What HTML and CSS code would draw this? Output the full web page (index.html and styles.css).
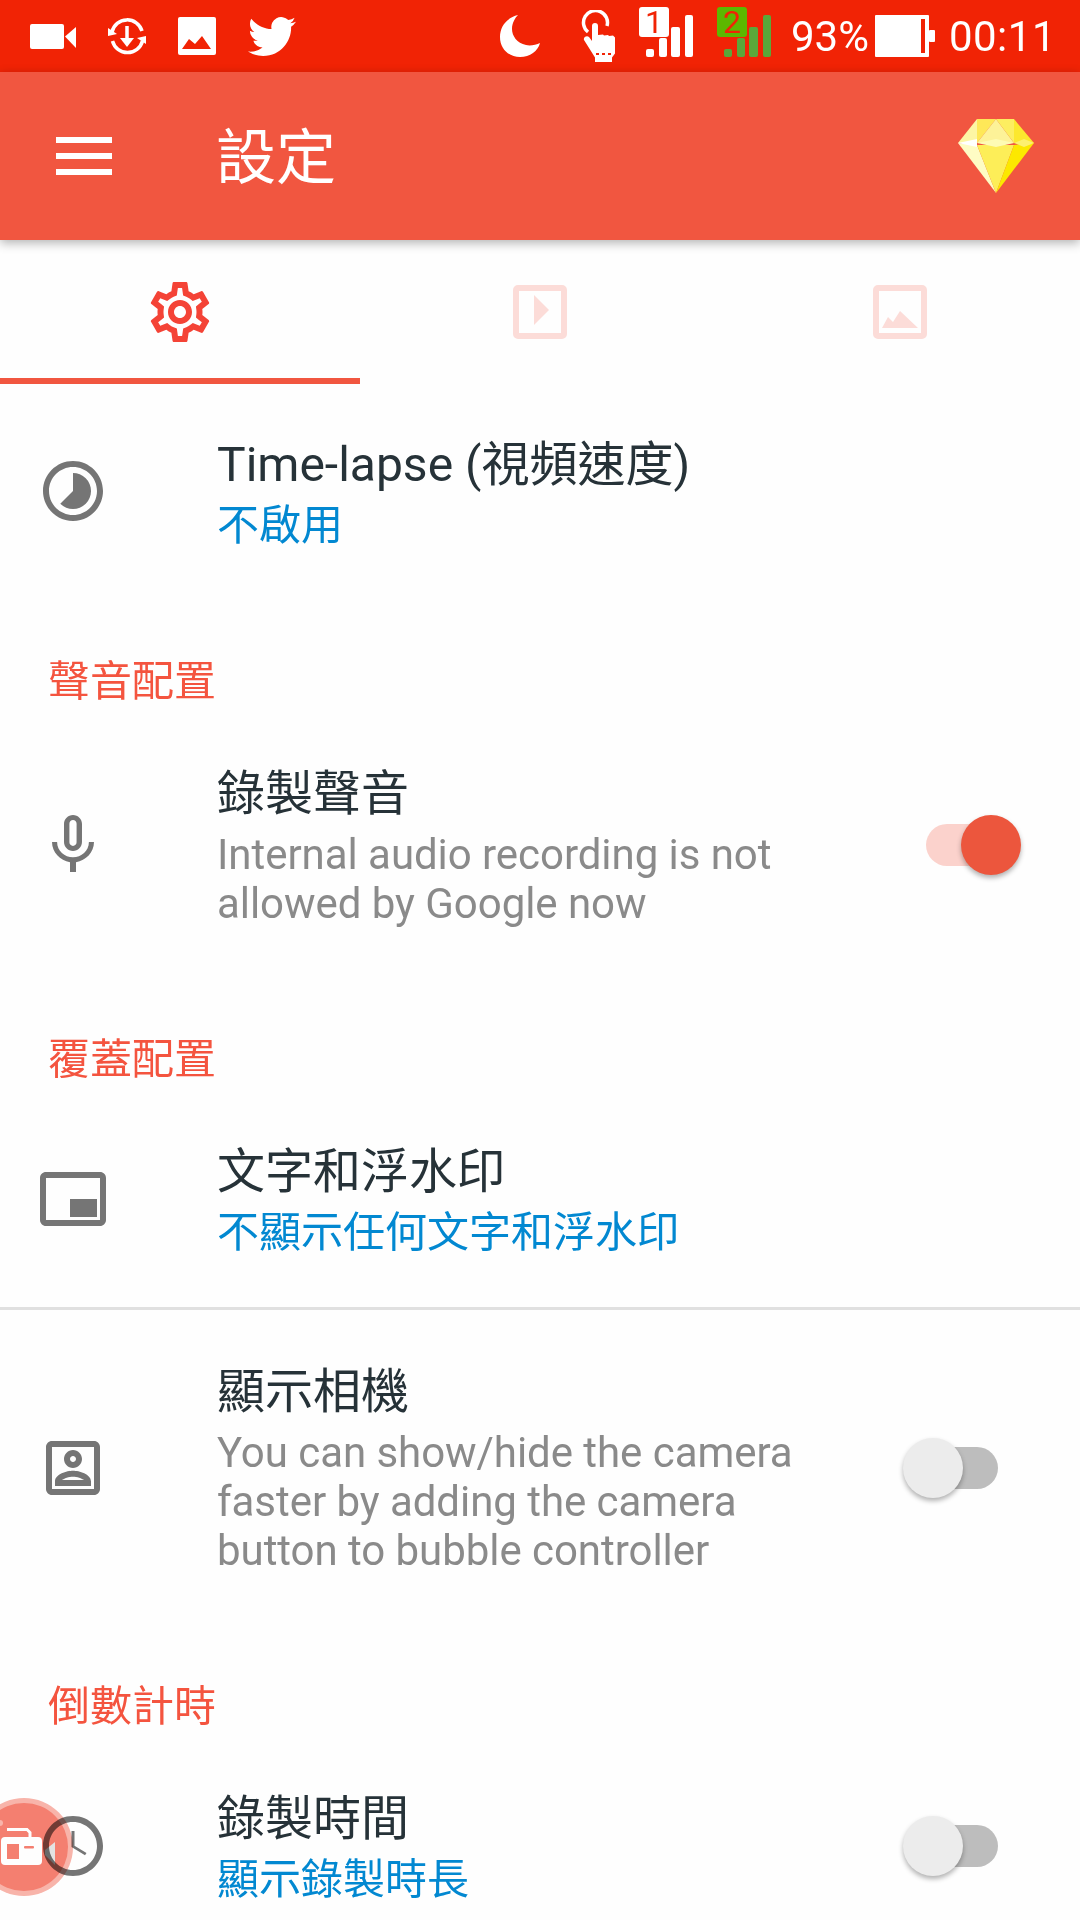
FILE: index.html
```html
<!DOCTYPE html>
<html lang="zh-Hant">
<head>
    <meta charset="UTF-8">
    <meta name="viewport" content="width=device-width, initial-scale=1.0">
    <title>設定</title>
    <link rel="stylesheet" href="styles.css">
</head>
<body>
    <div class="statusbar">
        <div class="status-left">
            <svg class="st-video" viewBox="0 0 46 25"><rect width="34" height="25" rx="2"/><polygon points="35,12.500 46,3 46,24"/></svg>
            <svg class="st-sync" viewBox="0 0 38 40"><path class="st-line" d="M4 16A15.500 15.500 0 0 1 34 15M34.500 25A15.500 15.500 0 0 1 4.500 25M19 10V24"/><polygon points="0,12 9,18 0,20"/><polygon points="38,28 29,22 38,20"/><polygon points="12,22 26,22 19,31"/></svg>
            <svg class="st-image" viewBox="0 0 38 38"><rect width="38" height="38" rx="2"/><polygon class="st-cut" points="4,32 11,22 17,27 24,19 33,32"/></svg>
            <svg class="st-twitter" viewBox="0 2 24 20"><path d="M23.953 4.570a10 10 0 01-2.825.775 4.958 4.958 0 002.163-2.723c-.951.555-2.005.959-3.127 1.184a4.920 4.920 0 00-8.384 4.482C7.690 8.095 4.067 6.130 1.640 3.162a4.822 4.822 0 00-.666 2.475c0 1.710.870 3.213 2.188 4.096a4.904 4.904 0 01-2.228-.616v.060a4.923 4.923 0 003.946 4.827 4.996 4.996 0 01-2.212.085 4.936 4.936 0 004.604 3.417 9.867 9.867 0 01-6.102 2.105c-.390 0-.779-.023-1.170-.067a13.995 13.995 0 007.557 2.209c9.053 0 13.998-7.496 13.998-13.985 0-.210 0-.420-.015-.630A9.935 9.935 0 0024 4.590z"/></svg>
        </div>
        <div class="status-right">
            <svg class="st-moon" viewBox="0 0 40 42"><path d="M18 0C6 3 0 12 0 22c0 12 9 20 20 20 10 0 18-6 20-14-4 2-10 3-14 2-9-2-14-9-14-16 0-6 3-11 6-14z"/></svg>
            <svg class="st-hand" viewBox="0 0 34 52"><path class="st-line" d="M7 22A12 12 0 1 1 26 16"/><path d="M11 16a3 3 0 0 1 6 0v9l5-.5 1 1 4-.5 1 1 4-.5 2 2v16l-3 4v8H14v-8L3 30c-1-3 3-5 5-3l3 4z"/><path class="st-dots" d="M15 44h3M21 44h3M27 44h3"/></svg>
            <svg class="st-sim" viewBox="0 -6 54 56"><rect width="30" height="30" rx="3"/><text class="sim-num" x="15" y="26">1</text><rect x="7" y="42" width="8" height="8" rx="2"/><rect x="20" y="31" width="8" height="19" rx="2"/><rect x="32" y="20" width="9" height="30" rx="2"/><rect x="46" y="8" width="8" height="42" rx="2"/></svg>
            <svg class="st-sim st-sim2" viewBox="0 -6 54 56"><rect class="sim-box" width="30" height="30" rx="3"/><text class="sim-num" x="15" y="26">2</text><rect x="7" y="42" width="8" height="8" rx="2"/><rect x="20" y="31" width="8" height="19" rx="2"/><rect x="32" y="20" width="9" height="30" rx="2"/><rect x="46" y="8" width="8" height="42" rx="2"/></svg>
            <span class="st-percent">93%</span>
            <svg class="st-battery" viewBox="0 0 60 42"><rect width="54" height="42" rx="1"/><rect x="54" y="15" width="6" height="12" rx="1"/><rect class="st-cut" x="46" y="4" width="4" height="34"/></svg>
            <span class="st-time">00:11</span>
        </div>
    </div>

    <header class="toolbar">
        <div class="menu-icon"><span></span><span></span><span></span></div>
        <h1>設定</h1>
        <svg class="gem" viewBox="0 0 76 74">
            <polygon fill="#fdf6a4" points="19,0 0,24 19,24"/>
            <polygon fill="#fee858" points="19,0 38,0 19,24"/>
            <polygon fill="#fdf298" points="38,0 19,24 56,24"/>
            <polygon fill="#fdee60" points="38,0 56,0 56,24"/>
            <polygon fill="#fce82e" points="56,0 76,24 56,24"/>
            <polygon fill="#fefcc4" points="0,24 38,74 19,26"/>
            <polygon fill="#fdee58" points="19,26 38,74 56,26"/>
            <polygon fill="#fce800" points="56,26 38,74 76,24"/>
            <polygon fill="#fefbb4" points="19,24 38,20 56,24 38,28"/>
            <polygon fill="#ffffff" points="0,24 19,20 19,28"/>
            <polygon fill="#fdf070" points="56,24 66,20 76,24 66,28"/>
        </svg>
    </header>

    <nav class="tabs">
        <div class="tab tab-active">
            <svg class="tab-gear" viewBox="0 0 24 24"><path d="M19.430 12.980c.04-.32.07-.64.07-.98 0-.34-.03-.66-.07-.98l2.110-1.650c.19-.15.24-.42.12-.64l-2-3.460c-.09-.16-.26-.25-.44-.25-.06 0-.12.01-.17.03l-2.490 1c-.52-.4-1.080-.73-1.690-.98l-.38-2.650C14.460 2.180 14.250 2 14 2h-4c-.25 0-.46.18-.49.42l-.38 2.650c-.61.25-1.170.59-1.690.98l-2.490-1c-.06-.02-.12-.03-.18-.03-.17 0-.34.09-.43.25l-2 3.460c-.13.22-.07.49.12.64l2.110 1.650c-.04.32-.07.65-.07.98 0 .33.03.66.07.98l-2.110 1.650c-.19.15-.24.42-.12.64l2 3.460c.09.16.26.25.44.25.06 0 .12-.01.17-.03l2.490-1c.52.4 1.080.73 1.690.98l.38 2.650c.03.24.24.42.49.42h4c.25 0 .46-.18.49-.42l.38-2.650c.61-.25 1.170-.59 1.690-.98l2.490 1c.06.02.12.03.18.03.17 0 .34-.09.43-.25l2-3.460c.12-.22.07-.49-.12-.64l-2.110-1.650zm-1.980-1.710c.04.31.05.52.05.73 0 .21-.02.43-.05.73l-.14 1.130.89.7 1.080.84-.7 1.210-1.270-.51-1.040-.42-.9.68c-.43.32-.84.56-1.250.73l-1.060.43-.16 1.130-.2 1.350h-1.400l-.19-1.350-.16-1.130-1.060-.43c-.43-.18-.83-.41-1.230-.71l-.91-.7-1.060.43-1.270.51-.7-1.210 1.080-.84.89-.7-.14-1.130c-.03-.31-.05-.54-.05-.74s.02-.43.05-.73l.14-1.130-.89-.7-1.080-.84.7-1.210 1.270.51 1.040.42.9-.68c.43-.32.84-.56 1.250-.73l1.060-.43.16-1.130.2-1.350h1.390l.19 1.350.16 1.130 1.060.43c.43.18.83.41 1.230.71l.91.7 1.060-.43 1.270-.51.7 1.210-1.070.85-.89.7.14 1.130zM12 8c-2.210 0-4 1.790-4 4s1.790 4 4 4 4-1.790 4-4-1.790-4-4-4zm0 6c-1.100 0-2-.9-2-2s.9-2 2-2 2 .9 2 2-.9 2-2 2z"/></svg>
        </div>
        <div class="tab">
            <svg class="tab-square" viewBox="0 0 54 54"><rect class="tab-frame" x="3" y="3" width="48" height="48" rx="2"/><polygon points="21,10 36,25 21,40"/></svg>
        </div>
        <div class="tab">
            <svg class="tab-square" viewBox="0 0 54 54"><rect class="tab-frame" x="3" y="3" width="48" height="48" rx="2"/><polygon points="9,43 15,32 20,37 27,26 45,43"/></svg>
        </div>
    </nav>

    <section class="row row-first">
        <div class="row-icon"><svg viewBox="0 0 24 24"><path d="M16.240 7.760C15.070 6.590 13.540 6 12 6v6l-4.240 4.240c2.340 2.340 6.140 2.340 8.490 0 2.340-2.340 2.340-6.140-.01-8.480zM12 2C6.480 2 2 6.480 2 12s4.480 10 10 10 10-4.480 10-10S17.520 2 12 2zm0 18c-4.420 0-8-3.580-8-8s3.580-8 8-8 8 3.580 8 8-3.580 8-8 8z"/></svg></div>
        <div class="row-text">
            <div class="row-title">Time-lapse (視頻速度)</div>
            <div class="row-link">不啟用</div>
        </div>
    </section>

    <div class="section-title">聲音配置</div>
    <section class="row">
        <div class="row-icon"><svg viewBox="0 0 24 24"><path d="M12 14c1.660 0 2.990-1.340 2.990-3L15 5c0-1.660-1.340-3-3-3S9 3.340 9 5v6c0 1.660 1.340 3 3 3zm-1.200-9.100c0-.66.54-1.200 1.200-1.200.66 0 1.200.54 1.200 1.200l-.01 6.200c0 .66-.53 1.200-1.190 1.200-.66 0-1.200-.54-1.200-1.200V4.900zm6.500 6.100c0 3-2.540 5.100-5.300 5.100S6.700 14 6.700 11H5c0 3.410 2.720 6.230 6 6.720V21h2v-3.280c3.280-.48 6-3.300 6-6.720h-1.700z"/></svg></div>
        <div class="row-text">
            <div class="row-title">錄製聲音</div>
            <div class="row-sub">Internal audio recording is not allowed by Google now</div>
        </div>
        <div class="switch switch-on"><span class="track"></span><span class="knob"></span></div>
    </section>

    <div class="section-title">覆蓋配置</div>
    <section class="row row-divided">
        <div class="row-icon"><svg viewBox="0 0 24 24"><path d="M20 12h-9v6h9v-6zm3 7V4.980C23 3.880 22.100 3 21 3H3c-1.100 0-2 .88-2 1.980V19c0 1.100.9 2 2 2h18c1.100 0 2-.9 2-2zm-2 .02H3V4.970h18v14.050z"/></svg></div>
        <div class="row-text">
            <div class="row-title">文字和浮水印</div>
            <div class="row-link">不顯示任何文字和浮水印</div>
        </div>
    </section>
    <section class="row">
        <div class="row-icon"><svg viewBox="0 0 24 24"><path d="M19 5v14H5V5h14m0-2H5c-1.110 0-2 .9-2 2v14c0 1.100.89 2 2 2h14c1.100 0 2-.9 2-2V5c0-1.100-.9-2-2-2zm-7 9c-1.650 0-3-1.350-3-3s1.350-3 3-3 3 1.350 3 3-1.350 3-3 3zm0-4c-.55 0-1 .45-1 1s.45 1 1 1 1-.45 1-1-.45-1-1-1zm6 10H6v-1.530c0-2.500 3.970-3.580 6-3.580s6 1.080 6 3.580V18zm-9.690-2h7.380c-.69-.56-2.380-1.120-3.690-1.120s-3.010.56-3.690 1.120z"/></svg></div>
        <div class="row-text">
            <div class="row-title">顯示相機</div>
            <div class="row-sub">You can show/hide the camera faster by adding the camera button to bubble controller</div>
        </div>
        <div class="switch"><span class="track"></span><span class="knob"></span></div>
    </section>

    <div class="section-title">倒數計時</div>
    <section class="row">
        <div class="row-icon"><svg viewBox="0 0 24 24"><path d="M11.990 2C6.470 2 2 6.480 2 12s4.470 10 9.990 10C17.520 22 22 17.520 22 12S17.520 2 11.990 2zM12 20c-4.420 0-8-3.580-8-8s3.580-8 8-8 8 3.580 8 8-3.580 8-8 8z"/><path d="M12.500 7h-1v5.300l4.500 2.800.5-.8-4-2.400z"/></svg></div>
        <div class="row-text">
            <div class="row-title">錄製時間</div>
            <div class="row-link">顯示錄製時長</div>
        </div>
        <div class="switch"><span class="track"></span><span class="knob"></span></div>
    </section>

    <svg class="bubble" viewBox="0 0 100 100">
        <circle class="bubble-ring" cx="50" cy="50" r="49"/>
        <circle class="bubble-core" cx="50" cy="50" r="44"/>
        <circle class="bubble-spot" cx="26" cy="26" r="3"/>
        <path class="bubble-handle" d="M33 32.500h20l3 3v6"/>
        <rect class="bubble-cam" x="27" y="40" width="41" height="28" rx="4"/>
        <rect class="bubble-hole" x="33" y="47" width="12" height="15"/>
        <rect class="bubble-hole" x="50" y="49" width="10" height="2.500" rx="1"/>
        <polygon class="bubble-lens" points="71,53 81,45 81,68 71,58"/>
    </svg>
</body>
</html>
```

FILE: styles.css
```css
* {
    box-sizing: border-box;
}
html, body {
    margin: 0;
    padding: 0;
}
html {
    background-color: #fefefe;
}
body {
    position: relative;
    width: 1080px;
    height: 1920px;
    overflow: hidden;
    font-family: Roboto, "Noto Sans CJK TC", sans-serif;
    color: #263238;
}

/* status bar */
.statusbar {
    display: flex;
    align-items: center;
    height: 72px;
    padding: 0 24px 0 30px;
    background-color: #f12305;
    color: #fff;
    fill: #fff;
    font-size: 42px;
}
.status-left {
    display: flex;
    align-items: center;
    gap: 32px;
}
.status-right {
    display: flex;
    align-items: center;
    margin-left: auto;
}
.st-line {
    fill: none;
    stroke: #fff;
    stroke-width: 3.500;
}
.st-cut {
    fill: #f12305;
}
.st-dots {
    fill: none;
    stroke: #f12305;
    stroke-width: 2;
}
.st-video {
    width: 46px;
    height: 25px;
}
.st-sync {
    width: 38px;
    height: 40px;
}
.st-image {
    width: 38px;
    height: 38px;
}
.st-twitter {
    width: 48px;
    height: 41px;
}
.st-moon {
    width: 40px;
    height: 42px;
}
.st-hand {
    width: 34px;
    height: 52px;
    margin-left: 41px;
}
.st-sim {
    width: 54px;
    height: 56px;
    margin-left: 24px;
    margin-bottom: 14px;
}
.sim-num {
    font-family: Roboto, sans-serif;
    font-size: 32px;
    text-anchor: middle;
    fill: #f12305;
}
.st-sim2 {
    fill: #5aa83a;
}
.st-sim2 .sim-box {
    fill: #5cb800;
}
.st-percent {
    margin-left: 20px;
}
.st-battery {
    width: 60px;
    height: 42px;
    margin-left: 6px;
}
.st-time {
    margin-left: 14px;
    letter-spacing: 0.5px;
}

/* toolbar */
.toolbar {
    position: relative;
    z-index: 2;
    display: flex;
    align-items: center;
    height: 168px;
    padding: 0 46px 0 56px;
    background-color: #f15640;
    box-shadow: 0 3px 10px rgba(0, 0, 0, 0.3);
}
.menu-icon {
    display: flex;
    flex-direction: column;
    gap: 10px;
    width: 56px;
}
.menu-icon span {
    display: block;
    height: 6px;
    background-color: #fff;
}
.toolbar h1 {
    margin: 5px 0 0 104px;
    font-size: 60px;
    font-weight: 400;
    line-height: 1;
    color: #fff;
}
.gem {
    width: 76px;
    height: 74px;
    margin-left: auto;
}

/* tabs */
.tabs {
    display: grid;
    grid-template-columns: repeat(3, 1fr);
    height: 144px;
}
.tab {
    display: flex;
    align-items: center;
    justify-content: center;
    border-bottom: 6px solid transparent;
    padding-top: 6px;
    fill: #fcdcd8;
}
.tab-active {
    border-bottom-color: #f15640;
    fill: #f44336;
}
.tab-gear {
    width: 72px;
    height: 72px;
}
.tab-square {
    width: 54px;
    height: 54px;
}
.tab-frame {
    fill: none;
    stroke: #fcdcd8;
    stroke-width: 6;
}

/* rows */
.row {
    display: flex;
    align-items: center;
    padding: 50px 58px 50px 0;
}
.row-first {
    padding-top: 49px;
}
.row-first .row-icon {
    margin-bottom: 2px;
}
.row-divided {
    border-bottom: 3px solid #e0e0e0;
}
.row-icon {
    display: flex;
    justify-content: center;
    flex: 0 0 146px;
    margin-right: 71px;
    fill: #757575;
}
.row-icon svg {
    display: block;
    width: 72px;
    height: 72px;
}
.row-text {
    flex: 1;
    padding-right: 60px;
}
.row-title {
    font-size: 48px;
    line-height: 64px;
}
.row-sub, .row-link {
    margin-top: 4px;
    font-size: 42px;
    line-height: 49px;
}
.row-sub {
    color: #8a8a8a;
    letter-spacing: -0.05px;
}
.row-link {
    color: #0288d1;
}
.section-title {
    margin-top: 52px;
    padding-left: 48px;
    font-size: 42px;
    line-height: 60px;
    color: #f4543f;
}

/* switch */
.switch {
    position: relative;
    flex: 0 0 120px;
    height: 60px;
}
.track {
    position: absolute;
    top: 9px;
    left: 24px;
    width: 72px;
    height: 42px;
    border-radius: 21px;
    background-color: #bdbdbd;
}
.knob {
    position: absolute;
    top: 0;
    left: 1px;
    width: 60px;
    height: 60px;
    border-radius: 50%;
    background-color: #ececec;
    box-shadow: 0 3px 5px rgba(0, 0, 0, 0.3);
}
.switch-on .track {
    background-color: #fbd2cc;
}
.switch-on .knob {
    left: 59px;
    background-color: #ec563d;
}

/* floating record bubble, the clock icon shows through it */
.bubble {
    position: absolute;
    left: -26px;
    top: 1797px;
    width: 100px;
    height: 100px;
    mix-blend-mode: multiply;
}
.bubble-ring {
    fill: #f9b5ab;
}
.bubble-core {
    fill: #f57f70;
}
.bubble-spot {
    fill: #f9b5ab;
}
.bubble-handle {
    fill: none;
    stroke: #fff;
    stroke-width: 3;
}
.bubble-cam {
    fill: #fff;
}
.bubble-hole {
    fill: #f57f70;
}
.bubble-lens {
    fill: #e4e4e4;
}
```
